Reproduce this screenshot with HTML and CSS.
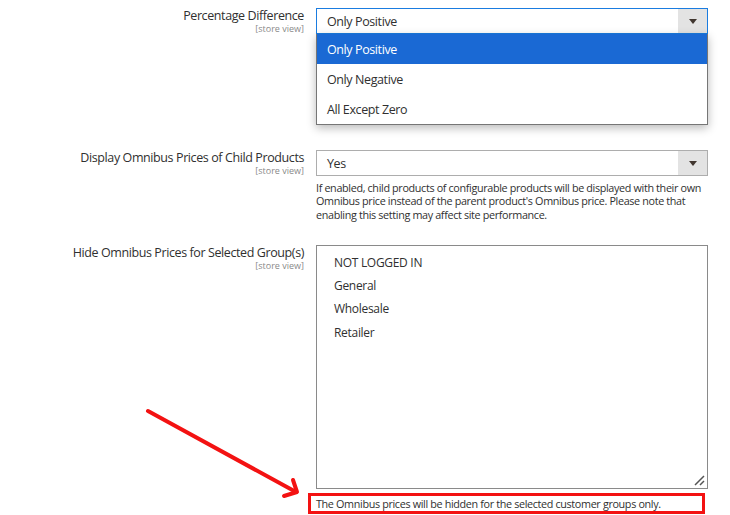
FILE: index.html
```html
<!DOCTYPE html>
<html lang="en">
<head>
    <meta charset="UTF-8">
    <meta name="viewport" content="width=device-width, initial-scale=1.0">
    <title>Omnibus Price Settings</title>
    <link rel="stylesheet" href="styles.css">
</head>
<body>
    <div class="form">
        <div class="field field-first">
            <div class="label">
                <span class="label-text">Percentage Difference</span>
                <span class="scope">[store view]</span>
            </div>
            <div class="control">
                <div class="select is-open">
                    <span class="select-value">Only Positive</span>
                    <span class="select-arrow"></span>
                </div>
                <ul class="dropdown">
                    <li class="option is-active">Only Positive</li>
                    <li class="option">Only Negative</li>
                    <li class="option">All Except Zero</li>
                </ul>
            </div>
        </div>

        <div class="field">
            <div class="label">
                <span class="label-text">Display Omnibus Prices of Child Products</span>
                <span class="scope">[store view]</span>
            </div>
            <div class="control">
                <div class="select">
                    <span class="select-value">Yes</span>
                    <span class="select-arrow"></span>
                </div>
                <p class="note">If enabled, child products of configurable products will be displayed with their own Omnibus price instead of the parent product's Omnibus price. Please note that enabling this setting may affect site performance.</p>
            </div>
        </div>

        <div class="field">
            <div class="label">
                <span class="label-text">Hide Omnibus Prices for Selected Group(s)</span>
                <span class="scope">[store view]</span>
            </div>
            <div class="control">
                <div class="multiselect">
                    <div class="multi-option">NOT LOGGED IN</div>
                    <div class="multi-option">General</div>
                    <div class="multi-option">Wholesale</div>
                    <div class="multi-option">Retailer</div>
                    <svg class="resize-grip" width="12" height="12" viewBox="0 0 12 12">
                        <path d="M2 11 L11 2 M7 11 L11 7" stroke="#555" stroke-width="1.5" fill="none"/>
                    </svg>
                </div>
                <p class="note note-marked">The Omnibus prices will be hidden for the selected customer groups only.</p>
            </div>
        </div>
    </div>

    <!-- annotation arrow pointing at the note -->
    <svg class="annotation" width="730" height="515" viewBox="0 0 730 515">
        <g stroke="#f31212" stroke-width="4" stroke-linecap="round" stroke-linejoin="round" fill="none">
            <line x1="148" y1="411" x2="296" y2="492"/>
            <polyline points="293,480 297,492 284,496"/>
        </g>
    </svg>
</body>
</html>
```

FILE: styles.css
```css
body {
    position: relative;
    margin: 0;
    width: 730px;
    height: 515px;
    overflow: hidden;
    font-family: 'Open Sans', sans-serif;
    color: #303030;
    background-color: #fff;
}
.form {
    padding-top: 8px;
}
.field {
    display: grid;
    grid-template-columns: 304px 392px;
    column-gap: 12px;
    margin-bottom: 24px;
}
.field-first {
    margin-bottom: 116px;
}
.label {
    display: flex;
    flex-direction: column;
    align-items: flex-end;
    padding-top: 1px;
    text-align: right;
}
.label-text {
    font-size: 12.5px;
    letter-spacing: -0.4px;
    line-height: 14px;
}
.scope {
    margin-top: 1px;
    font-size: 9px;
    line-height: 9px;
    color: #8a8a8a;
}
.control {
    position: relative;
}
.select {
    display: flex;
    height: 26px;
    box-sizing: border-box;
    border: 1px solid #adadad;
    background-color: #fff;
}
.select.is-open {
    border-color: #1a7ce0;
}
.select-value {
    flex: 1;
    padding: 1px 0 0 10px;
    font-size: 12.5px;
    letter-spacing: -0.4px;
    line-height: 23px;
}
.select-arrow {
    position: relative;
    width: 29px;
    background-color: #e3e3e3;
}
.select-arrow::after {
    content: '';
    position: absolute;
    left: 11px;
    top: 10px;
    border-left: 4px solid transparent;
    border-right: 4px solid transparent;
    border-top: 5px solid #41362f;
}
.dropdown {
    position: absolute;
    top: 26px;
    left: 0;
    right: 0;
    margin: 0;
    padding: 0;
    list-style: none;
    background-color: #fff;
    border: 1px solid #767676;
    border-top: none;
    box-shadow: 0 3px 9px rgba(0, 0, 0, 0.28);
    z-index: 2;
}
.option {
    padding: 2px 0 0 10px;
    font-size: 12.5px;
    letter-spacing: -0.4px;
    line-height: 28px;
    height: 28px;
}
.option.is-active {
    background-color: #1a69d4;
    color: #fff;
}
.note {
    margin: 5px 0 0;
    font-size: 10.8px;
    letter-spacing: -0.35px;
    line-height: 13.3px;
}
.multiselect {
    position: relative;
    height: 244px;
    box-sizing: border-box;
    border: 1px solid #8a8a8a;
    padding: 5px 0 0 17px;
}
.multi-option {
    font-size: 12px;
    letter-spacing: -0.3px;
    line-height: 23.2px;
}
.resize-grip {
    position: absolute;
    right: 2px;
    bottom: 2px;
}
.note-marked {
    margin: 4px 3px 0 -8px;
    padding-left: 5px;
    border: 3px solid #f31212;
    line-height: 15px;
}
.annotation {
    position: absolute;
    top: 0;
    left: 0;
    pointer-events: none;
}
```
